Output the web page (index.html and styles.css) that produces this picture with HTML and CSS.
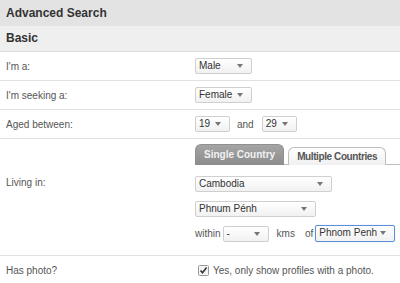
FILE: index.html
```html
<!DOCTYPE html>
<html lang="en">
<head>
  <meta charset="UTF-8" />
  <title>Advanced Search</title>
  <link rel="stylesheet" href="styles.css">
</head>
<body>

  <div class="panel">
    <div class="panel-title">Advanced Search</div>
    <div class="section-title">Basic</div>

    <div class="row">
      <div class="label">I'm a:</div>
      <div class="field"><span class="select sel-sex">Male</span></div>
    </div>

    <div class="row">
      <div class="label">I'm seeking a:</div>
      <div class="field"><span class="select sel-sex">Female</span></div>
    </div>

    <div class="row">
      <div class="label">Aged between:</div>
      <div class="field">
        <span class="select sel-age">19</span>
        <span class="and">and</span>
        <span class="select sel-age">29</span>
      </div>
    </div>

    <!-- Location -->
    <div class="row row-living">
      <div class="label label-living">Living in:</div>
      <div class="field field-col">
        <div class="tabs">
          <div class="tab active">Single Country</div>
          <div class="tab">Multiple Countries</div>
        </div>
        <span class="select sel-country">Cambodia</span>
        <span class="select sel-city">Phnum Pénh</span>
        <div class="within">
          <span>within</span>
          <span class="select sel-dist">-</span>
          <span class="kms">kms</span>
          <span class="of">of</span>
          <span class="select sel-near focused">Phnom Penh</span>
        </div>
      </div>
    </div>

    <div class="row">
      <div class="label">Has photo?</div>
      <div class="field">
        <svg class="check" width="11" height="11" viewBox="0 0 11 11">
          <rect x="0.5" y="0.5" width="10" height="10" rx="1" fill="#f4f4f4" stroke="#9a9a9a"/>
          <path d="M2.5 5.5 L4.5 7.8 L8.6 2.6" fill="none" stroke="#333" stroke-width="1.6"/>
        </svg>
        <span>Yes, only show profiles with a photo.</span>
      </div>
    </div>
  </div>

</body>
</html>
```

FILE: styles.css
```css
* {
  box-sizing: border-box;
  margin: 0;
  padding: 0;
}

body {
  background: #fff;
  font-family: "Liberation Sans", Arial, sans-serif;
  font-size: 10px;
  color: #555;
}

.panel {
  width: 400px;
}

.panel-title {
  height: 26px;
  line-height: 26px;
  padding-left: 6px;
  background: #e3e3e3;
  color: #333;
  font-size: 12px;
  font-weight: bold;
}

.section-title {
  height: 26px;
  line-height: 25px;
  padding-left: 6px;
  background: #efefef;
  border-bottom: 1px solid #dcdcdc;
  color: #333;
  font-size: 12px;
  font-weight: bold;
}

.row {
  display: flex;
  align-items: center;
  height: 29px;
  border-bottom: 1px solid #e2e2e2;
}

.label {
  flex-shrink: 0;
  width: 195px;
  padding-left: 6px;
}

.field {
  flex: 1;
  min-width: 0;
  display: flex;
  align-items: center;
  white-space: nowrap;
}

/* fake selects */
.select {
  position: relative;
  display: inline-block;
  height: 16px;
  line-height: 14px;
  padding-left: 3px;
  border: 1px solid #cfcfcf;
  border-radius: 2px;
  background: linear-gradient(#ffffff, #f1f1f1);
  color: #333;
  font-size: 10px;
}

.select::after {
  content: "";
  position: absolute;
  right: 8px;
  top: 5px;
  border-left: 3px solid transparent;
  border-right: 3px solid transparent;
  border-top: 4px solid #777;
}

.sel-sex { width: 57px; }
.sel-age { width: 35px; }
.sel-country { width: 137px; margin-top: 11px; }
.sel-city { width: 121px; margin-top: 9px; }
.sel-dist { width: 46px; margin-left: 2px; }
.sel-near { width: 80px; margin-left: 2px; height: 17px; }

.select.focused {
  border-color: #5b8fd6;
  box-shadow: 0 0 1px #9cc0ee;
}

.and {
  margin: 0 8px 0 7px;
}

/* living in */
.row-living {
  height: 117px;
  align-items: flex-start;
  padding-top: 5px;
}

.label-living {
  margin-top: 33px;
}

.field-col {
  flex-direction: column;
  align-items: flex-start;
}

.tabs {
  display: flex;
  align-items: flex-end;
  width: 100%;
  height: 21px;
  border-bottom: 1px solid #bdbdbd;
}

.tab {
  height: 18px;
  line-height: 17px;
  padding: 0 8px;
  margin-left: 4px;
  margin-bottom: -1px;
  border: 1px solid #bdbdbd;
  border-bottom: none;
  border-radius: 6px 6px 0 0;
  background: linear-gradient(#ffffff, #f0f0f0);
  color: #555;
  font-size: 10px;
  font-weight: bold;
  letter-spacing: -0.4px;
}

.tab.active {
  height: 21px;
  line-height: 20px;
  padding: 0 8px;
  margin-left: 0;
  border-color: #8f8f8f;
  background: linear-gradient(#a5a5a5, #8c8c8c);
  color: #f2f2f2;
  letter-spacing: 0;
}

.within {
  display: flex;
  align-items: center;
  margin-top: 8px;
}

.kms {
  margin-left: 8px;
}

.of {
  margin-left: 10px;
}

.check {
  margin-left: 3px;
  margin-right: 4px;
}
```
